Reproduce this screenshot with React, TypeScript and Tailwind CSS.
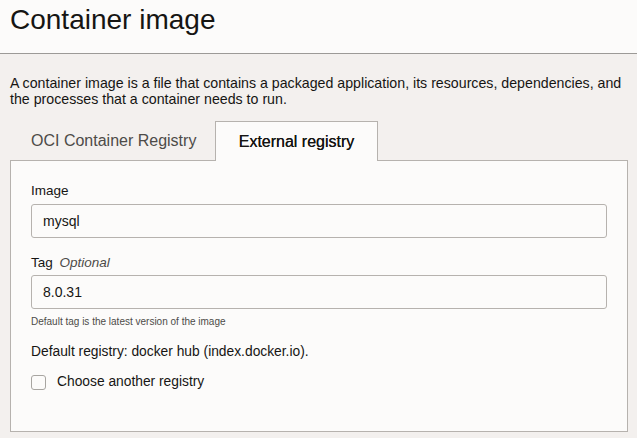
export default function App() {
  return (
    <div className="w-[637px] h-[438px] overflow-hidden bg-[#f3f0ee] text-[#161513] font-['Liberation_Sans',Arial,sans-serif]">
      {/* Header */}
      <div className="h-[54px] bg-[#fcfbfa] border-b border-[#9c9a97] px-[10px] pt-[2px]">
        <h1 className="text-[28px] leading-[36px] font-normal">Container image</h1>
      </div>

      <div className="px-[10px] pr-[9px]">
        <p className="mt-[21px] text-[14.2px] leading-[16px] text-[#161513] whitespace-nowrap">
          A container image is a file that contains a packaged application, its resources, dependencies, and
          <br />
          the processes that a container needs to run.
        </p>

        {/* Tabs */}
        <div className="mt-[14px] flex h-[39px] items-end">
          <div className="w-[205px] h-[39px] flex items-center pl-[21px] text-[16px] text-[#4d4b48]">
            OCI Container Registry
          </div>
          <div className="relative -mb-px w-[163px] h-[40px] bg-[#fcfbfa] border border-b-0 border-[#b6b2ae] flex items-center justify-center text-[16px] text-[#161513] [text-shadow:0_0_0.4px_#161513] z-10">
            External registry
          </div>
        </div>

        {/* Panel */}
        <div className="h-[272px] bg-[#fcfbfa] border border-[#b6b2ae] px-[20px] pt-[22px]">
          <label className="block text-[13.5px] leading-[16px]">Image</label>
          <div className="mt-[5px] h-[34px] rounded-[3px] border border-[#b6b2ae] bg-[#fcfbfa] flex items-center px-[11px] text-[14px]">
            mysql
          </div>

          <label className="block mt-[17px] text-[13.5px] leading-[16px]">
            Tag <i className="ml-[3px] text-[#4d4b48]">Optional</i>
          </label>
          <div className="mt-[4px] h-[34px] rounded-[3px] border border-[#b6b2ae] bg-[#fcfbfa] flex items-center px-[11px] text-[14px]">
            8.0.31
          </div>
          <p className="mt-[7px] text-[10px] leading-[12px] text-[#4d4b48]">Default tag is the latest version of the image</p>

          <p className="mt-[16px] text-[13.8px] leading-[16px]">Default registry: docker hub (index.docker.io).</p>

          <div className="mt-[14px] flex items-center gap-[11px]">
            <span className="w-[15px] h-[15px] rounded-[3px] border border-[#a8a5a1] bg-[#fcfbfa]" />
            <span className="text-[13.8px] leading-[16px] text-[#161513]">Choose another registry</span>
          </div>
        </div>
      </div>
    </div>
  );
}
